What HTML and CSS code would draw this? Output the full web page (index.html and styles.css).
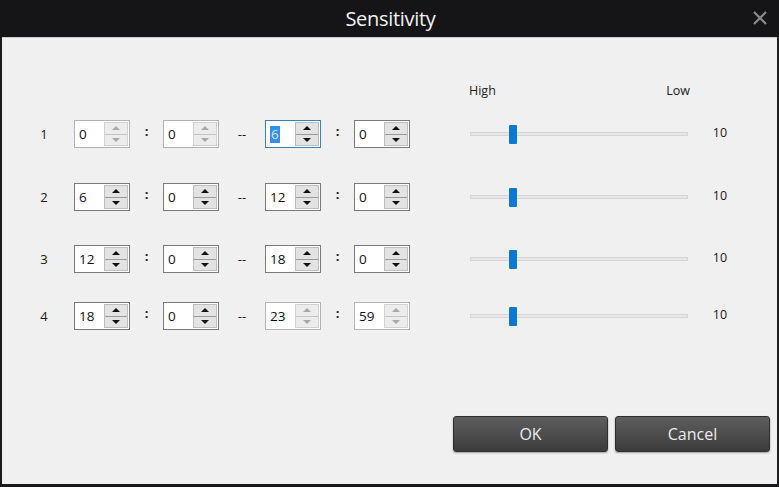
FILE: index.html
```html
<!DOCTYPE html>
<html>
<head>
<meta charset="utf-8">
<link rel="stylesheet" href="styles.css">
</head>
<body>
<div class="window">
  <div class="titlebar">
    <span class="title">Sensitivity</span>
    <svg class="close" width="14" height="14" viewBox="0 0 14 14"><path d="M1 1 L13 13 M13 1 L1 13" stroke="#8c8c8c" stroke-width="2.2" fill="none"/></svg>
  </div>
  <div class="content">
    <div class="header">
      <span>High</span><span>Low</span>
    </div>

    <div class="row r1">
      <span class="num">1</span>
      <div class="spin disabled"><span class="val">0</span><div class="btns"><i class="up"></i><i class="down"></i></div></div>
      <span class="sep">:</span>
      <div class="spin disabled"><span class="val">0</span><div class="btns"><i class="up"></i><i class="down"></i></div></div>
      <span class="dash">--</span>
      <div class="spin focus"><span class="val"><span class="sel">6</span></span><div class="btns"><i class="up"></i><i class="down"></i></div></div>
      <span class="sep">:</span>
      <div class="spin"><span class="val">0</span><div class="btns"><i class="up"></i><i class="down"></i></div></div>
      <div class="slider"><div class="track"></div><div class="thumb"></div></div>
      <span class="value">10</span>
    </div>

    <div class="row r2">
      <span class="num">2</span>
      <div class="spin"><span class="val">6</span><div class="btns"><i class="up"></i><i class="down"></i></div></div>
      <span class="sep">:</span>
      <div class="spin"><span class="val">0</span><div class="btns"><i class="up"></i><i class="down"></i></div></div>
      <span class="dash">--</span>
      <div class="spin"><span class="val">12</span><div class="btns"><i class="up"></i><i class="down"></i></div></div>
      <span class="sep">:</span>
      <div class="spin"><span class="val">0</span><div class="btns"><i class="up"></i><i class="down"></i></div></div>
      <div class="slider"><div class="track"></div><div class="thumb"></div></div>
      <span class="value">10</span>
    </div>

    <div class="row r3">
      <span class="num">3</span>
      <div class="spin"><span class="val">12</span><div class="btns"><i class="up"></i><i class="down"></i></div></div>
      <span class="sep">:</span>
      <div class="spin"><span class="val">0</span><div class="btns"><i class="up"></i><i class="down"></i></div></div>
      <span class="dash">--</span>
      <div class="spin"><span class="val">18</span><div class="btns"><i class="up"></i><i class="down"></i></div></div>
      <span class="sep">:</span>
      <div class="spin"><span class="val">0</span><div class="btns"><i class="up"></i><i class="down"></i></div></div>
      <div class="slider"><div class="track"></div><div class="thumb"></div></div>
      <span class="value">10</span>
    </div>

    <div class="row r4">
      <span class="num">4</span>
      <div class="spin"><span class="val">18</span><div class="btns"><i class="up"></i><i class="down"></i></div></div>
      <span class="sep">:</span>
      <div class="spin"><span class="val">0</span><div class="btns"><i class="up"></i><i class="down"></i></div></div>
      <span class="dash">--</span>
      <div class="spin disabled"><span class="val">23</span><div class="btns"><i class="up"></i><i class="down"></i></div></div>
      <span class="sep">:</span>
      <div class="spin disabled"><span class="val">59</span><div class="btns"><i class="up"></i><i class="down"></i></div></div>
      <div class="slider"><div class="track"></div><div class="thumb"></div></div>
      <span class="value">10</span>
    </div>

    <div class="buttons">
      <button class="btn">OK</button>
      <button class="btn">Cancel</button>
    </div>
  </div>
</div>
</body>
</html>
```

FILE: styles.css
```css
* { box-sizing: border-box; }
html, body { margin: 0; padding: 0; }
body {
  width: 779px;
  height: 487px;
  overflow: hidden;
  font-family: "Open Sans", "Noto Sans", sans-serif;
  font-size: 13px;
  color: #1a1a1a;
  background: #1b1a1d;
}
.window {
  width: 779px;
  height: 487px;
  display: flex;
  flex-direction: column;
  background: #1b1a1d;
}
.titlebar {
  height: 37px;
  flex: none;
  display: flex;
  align-items: center;
  justify-content: center;
  position: relative;
  background: #151417;
}
.title {
  color: #f2f2f2;
  font-size: 20px;
  letter-spacing: -0.3px;
  margin-left: 2px;
}
.close {
  position: absolute;
  right: 12px;
  top: 11px;
}
.content {
  flex: 1;
  margin: 0 2px 3px 2px;
  background: #f0f0f0;
  border-top: 1px solid #cfcfcf;
  display: flex;
  flex-direction: column;
}
.header {
  display: flex;
  justify-content: space-between;
  width: 221px;
  margin: 44px 0 0 467px;
  height: 18px;
  line-height: 18px;
  font-size: 12.5px;
  color: #222;
}
.row {
  display: flex;
  align-items: center;
  height: 28px;
  padding-left: 32px;
}
.r1 { margin-top: 20px; }
.r2 { margin-top: 35px; }
.r3 { margin-top: 34px; }
.r4 { margin-top: 29px; }
.num {
  width: 20px;
  text-align: center;
  margin-right: 20px;
}
.sep {
  width: 33px;
  text-align: center;
  font-weight: bold;
  position: relative;
  top: -3px;
}
.dash {
  width: 46px;
  text-align: center;
}
.spin {
  width: 56px;
  height: 28px;
  display: flex;
  background: #fff;
  border: 1px solid #7a7a7a;
}
.spin.disabled { border-color: #b4b4b4; }
.spin.focus { border-color: #3d7fbf; }
.val {
  flex: 1;
  display: flex;
  align-items: center;
  padding-left: 4px;
  font-size: 13.5px;
  color: #111;
}
.sel {
  background: #3390f0;
  color: #cfe6ff;
  padding: 0 1px;
  line-height: 17px;
}
.btns {
  width: 24px;
  margin: 1px 1px 1px 0;
  display: flex;
  flex-direction: column;
  background: #e3e3e3;
  border: 1px solid #bdbdbd;
}
.btns i {
  flex: 1;
  display: flex;
  align-items: center;
  justify-content: center;
}
.btns i.down { border-top: 1px solid #9a9a9a; }
.btns i::after {
  content: "";
  width: 0;
  height: 0;
  border-left: 4px solid transparent;
  border-right: 4px solid transparent;
}
.btns i.up::after { border-bottom: 4px solid #111; }
.btns i.down::after { border-top: 4px solid #111; }
.disabled .btns { background: #ececec; border-color: #d2d2d2; }
.disabled .btns i.down { border-top-color: #c4c4c4; }
.disabled .btns i.up::after { border-bottom-color: #a8a8a8; }
.disabled .btns i.down::after { border-top-color: #a8a8a8; }
.slider {
  width: 218px;
  height: 20px;
  margin-left: 60px;
  position: relative;
  display: flex;
  align-items: center;
}
.track {
  width: 100%;
  height: 4px;
  background: #e7e7e7;
  border: 1px solid #d6d6d6;
}
.thumb {
  position: absolute;
  left: 39px;
  top: 1px;
  width: 8px;
  height: 19px;
  background: #0a78d7;
  border-radius: 1px;
}
.value {
  width: 64px;
  text-align: center;
  font-size: 12.5px;
  position: relative;
  top: -2px;
}
.buttons {
  margin-top: auto;
  display: flex;
  justify-content: flex-end;
  gap: 7px;
  padding: 0 7px 32px 0;
}
.btn {
  width: 155px;
  height: 36px;
  border: 1px solid #2e2e2e;
  border-radius: 3px;
  background: linear-gradient(#5e5e5e, #3b3b3b);
  color: #ececec;
  font-family: "Open Sans", "Noto Sans", sans-serif;
  font-size: 16px;
  box-shadow: 0 1px 2px rgba(0,0,0,0.35);
  padding: 0;
}
```
